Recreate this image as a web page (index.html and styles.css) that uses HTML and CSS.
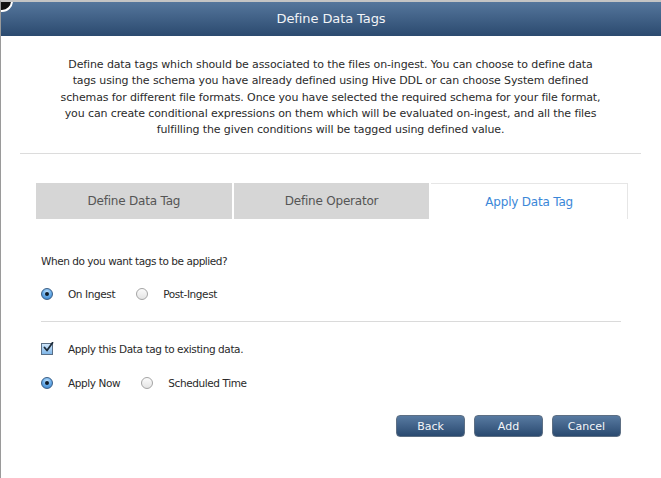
FILE: index.html
```html
<!DOCTYPE html>
<html>
<head>
<meta charset="utf-8">
<link rel="stylesheet" href="styles.css">
</head>
<body>
<div class="dialog">
  <span class="close"></span>
  <div class="titlebar">Define Data Tags</div>
  <div class="content">
    <p class="desc">Define data tags which should be associated to the files on-ingest. You can choose to define data<br>tags using the schema you have already defined using Hive DDL or can choose System defined<br>schemas for different file formats. Once you have selected the required schema for your file format,<br>you can create conditional expressions on them which will be evaluated on-ingest, and all the files<br>fulfilling the given conditions will be tagged using defined value.</p>
    <div class="sep"></div>
    <div class="tabs">
      <div class="tab">Define Data Tag</div>
      <div class="tab">Define Operator</div>
      <div class="tab active">Apply Data Tag</div>
    </div>
    <div class="panel">
      <p class="question">When do you want tags to be applied?</p>
      <div class="row">
        <span class="opt"><span class="radio on"></span><span class="lbl">On Ingest</span></span>
        <span class="opt"><span class="radio"></span><span class="lbl">Post-Ingest</span></span>
      </div>
      <div class="divider"></div>
      <div class="row check-row">
        <span class="opt"><span class="check"><svg viewBox="0 0 12 12" width="12" height="12"><path d="M2.5 5.5 L5 8.5 L10.5 0.8" fill="none" stroke="#1d2b3a" stroke-width="1.8" stroke-linecap="round" stroke-linejoin="round"/></svg></span><span class="lbl">Apply this Data tag to existing data.</span></span>
      </div>
      <div class="row apply-row">
        <span class="opt"><span class="radio on"></span><span class="lbl">Apply Now</span></span>
        <span class="opt"><span class="radio"></span><span class="lbl">Scheduled Time</span></span>
      </div>
      <div class="buttons">
        <button class="btn">Back</button>
        <button class="btn">Add</button>
        <button class="btn">Cancel</button>
      </div>
    </div>
  </div>
</div>
</body>
</html>
```

FILE: styles.css
```css
html, body {
  margin: 0;
  padding: 0;
  background: #ffffff;
}
body {
  font-family: "DejaVu Sans", "Liberation Sans", sans-serif;
  color: #2a2a2a;
}
.dialog {
  position: relative;
  width: 661px;
  height: 478px;
  box-sizing: border-box;
  border-left: 1px solid #9a9a9a;
  border-top: 2px solid #c4c4c4;
  background: #fff;
  overflow: hidden;
}
.close {
  position: absolute;
  left: -10px;
  top: -12px;
  width: 18px;
  height: 18px;
  border-radius: 50%;
  background: #111;
  border: 2px solid #fff;
}
.titlebar {
  height: 34px;
  background: linear-gradient(#55769c, #2b4a6f);
  color: #f2f4f7;
  font-size: 13px;
  text-align: center;
  line-height: 34px;
  letter-spacing: -0.1px;
}
.content {
  padding: 0 20px 0 19px;
}
.desc {
  margin: 21px 0 0;
  font-size: 11px;
  line-height: 16.3px;
  text-align: center;
  color: #2b2b2b;
  letter-spacing: -0.12px;
}
.sep {
  margin-top: 15px;
  height: 1px;
  background: #dcdcdc;
}
.tabs {
  display: flex;
  gap: 2px;
  margin: 29px 13px 0 16px;
}
.tab {
  flex: 1;
  height: 36px;
  line-height: 36px;
  text-align: center;
  background: #d6d6d6;
  color: #555;
  font-size: 12px;
  letter-spacing: -0.2px;
}
.tab.active {
  background: #fff;
  color: #3b87d8;
  box-sizing: border-box;
  border-top: 1px solid #e6e6e6;
  border-right: 1px solid #e6e6e6;
}
.panel {
  padding: 0 20px 0 21px;
}
.question {
  margin: 35px 0 0;
  font-size: 10.5px;
  line-height: 14px;
  letter-spacing: -0.45px;
}
.row {
  display: flex;
  align-items: center;
  margin-top: 19px;
  height: 14px;
  font-size: 10.5px;
  letter-spacing: -0.4px;
}
.opt {
  display: inline-flex;
  align-items: center;
  margin-right: 21px;
}
.radio {
  width: 12px;
  height: 12px;
  border-radius: 50%;
  box-sizing: border-box;
  border: 1px solid #a4a4a4;
  background: linear-gradient(#fbfbfb, #e4e4e4);
  margin-right: 15px;
  position: relative;
}
.radio.on {
  border-color: #3a5e86;
  background: radial-gradient(circle at 50% 30%, #bfe0fb 0%, #6fb0ea 45%, #2d79c6 100%);
}
.radio.on::after {
  content: "";
  position: absolute;
  left: 3px;
  top: 3px;
  width: 4px;
  height: 4px;
  border-radius: 50%;
  background: #0f1c2a;
}
.divider {
  margin-top: 20px;
  height: 1px;
  background: #dadada;
}
.check-row {
  margin-top: 20px;
}
.apply-row {
  margin-top: 20px;
}
.check {
  width: 12px;
  height: 12px;
  box-sizing: border-box;
  border: 1px solid #5a6f86;
  background: linear-gradient(#cfe6fb, #7fb6e8);
  margin-right: 15px;
  position: relative;
}
.check svg {
  position: absolute;
  left: 0;
  top: -2px;
}
.buttons {
  display: flex;
  justify-content: flex-end;
  gap: 9px;
  margin-top: 25px;
}
.btn {
  width: 69px;
  height: 22px;
  border: 1px solid #5d6f84;
  border-radius: 4px;
  background: linear-gradient(#587aa1, #2a4a70);
  color: #f4f6f9;
  font-family: "DejaVu Sans", "Liberation Sans", sans-serif;
  font-size: 11px;
  padding: 0;
}
```
